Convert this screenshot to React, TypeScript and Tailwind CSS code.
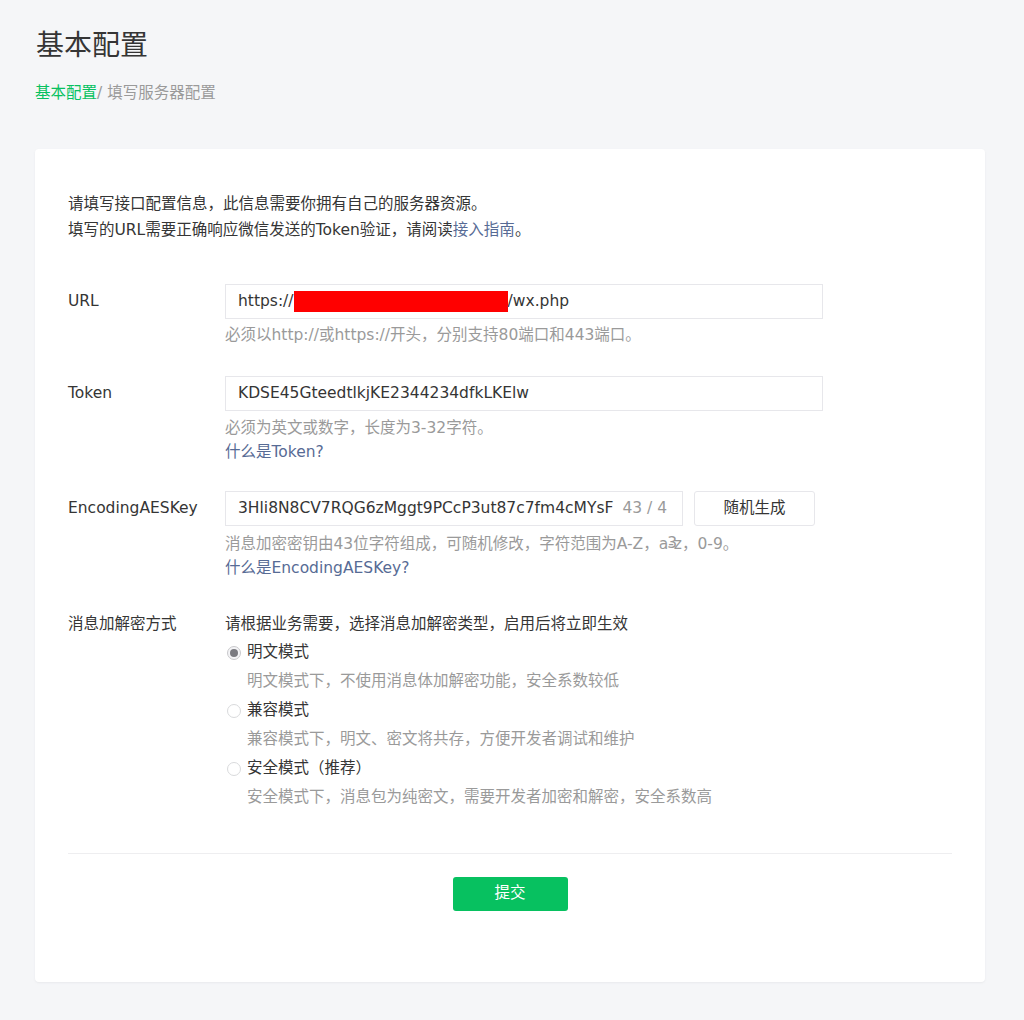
import React from "react";

const font = { fontFamily: '"DejaVu Sans", "Noto Sans CJK SC", sans-serif' };

function Radio({ checked }: { checked?: boolean }) {
  return (
    <span
      className={`mr-[6px] flex h-[14px] w-[14px] shrink-0 items-center justify-center rounded-full border ${
        checked ? "border-[#c9c9cc] bg-[#f4f4f6]" : "border-[#d9dadc] bg-white"
      }`}
    >
      {checked && <span className="h-[8px] w-[8px] rounded-full bg-[#7a7a80]" />}
    </span>
  );
}

function Row({ label, children, className = "" }: { label: string; children: React.ReactNode; className?: string }) {
  return (
    <div className={`flex ${className}`}>
      <div className="w-[157px] shrink-0 leading-[35px] text-[#353535]">{label}</div>
      <div className="flex-1">{children}</div>
    </div>
  );
}

export default function App() {
  return (
    <div className="min-h-[1020px] bg-[#f5f6f8] pt-[28px] pr-[39px] pb-[39px] pl-[35px] text-[15.5px]" style={font}>
      <h1 className="pl-px text-[28px] leading-[36px] font-normal text-[#353535]">基本配置</h1>
      <div className="mt-[19px] leading-[20px] text-[#9a9a9a]">
        <span className="text-[#07c160]">基本配置</span>/ 填写服务器配置
      </div>

      <div className="mt-[46px] rounded-[4px] bg-white px-[33px] pt-[42px] pb-[71px] shadow-[0_1px_2px_rgba(150,150,160,0.12)]">
        <p className="leading-[26px] text-[#353535]">
          请填写接口配置信息，此信息需要你拥有自己的服务器资源。
          <br />
          填写的URL需要正确响应微信发送的Token验证，请阅读<span className="text-[#576b95]">接入指南</span>。
        </p>

        <Row label="URL" className="mt-[41px]">
          <div className="flex h-[35px] w-[598px] items-center border border-[#e7e7eb] px-[12px] text-[#353535]">
            https://<span className="inline-block h-[21px] w-[214px] bg-[#ff0000]" />/wx.php
          </div>
          <div className="mt-[4px] leading-[24px] text-[#9a9a9a]">必须以http://或https://开头，分别支持80端口和443端口。</div>
        </Row>

        <Row label="Token" className="mt-[29px]">
          <div className="flex h-[35px] w-[598px] items-center border border-[#e7e7eb] px-[12px] text-[#353535]">
            KDSE45GteedtlkjKE2344234dfkLKElw
          </div>
          <div className="mt-[5px] leading-[24px] text-[#9a9a9a]">必须为英文或数字，长度为3-32字符。</div>
          <div className="leading-[24px] text-[#576b95]">什么是Token?</div>
        </Row>

        <Row label="EncodingAESKey" className="mt-[27px]">
          <div className="flex gap-[11px]">
            <div className="flex h-[35px] w-[458px] items-center overflow-hidden border border-[#e7e7eb] pl-[12px] whitespace-nowrap">
              <span className="text-[#353535]">3Hli8N8CV7RQG6zMggt9PCcP3ut87c7fm4cMYsF</span>
              <span className="ml-[9px] text-[#9a9a9a]">43 / 4</span>
            </div>
            <button className="h-[35px] w-[121px] rounded-[3px] border border-[#e7e7eb] bg-white text-[#353535]">随机生成</button>
          </div>
          <div className="mt-[6px] leading-[24px] text-[#9a9a9a]">
            消息加密密钥由43位字符组成，可随机修改，字符范围为A-Z，a
            <span className="relative">
              -<span className="absolute top-[-4px] left-[-1px]">3</span>
            </span>
            z，0-9。
          </div>
          <div className="leading-[24px] text-[#576b95]">什么是EncodingAESKey?</div>
        </Row>

        <div className="mt-[32px] flex">
          <div className="w-[157px] shrink-0 leading-[24px] text-[#353535]">消息加解密方式</div>
          <div className="flex-1 text-[#353535]">
            <div className="leading-[24px]">请根据业务需要，选择消息加解密类型，启用后将立即生效</div>
            <div className="mt-[2px] flex items-center pl-[2px] leading-[29px]">
              <Radio checked />
              明文模式
            </div>
            <div className="pl-[22px] leading-[29px] text-[#9a9a9a]">明文模式下，不使用消息体加解密功能，安全系数较低</div>
            <div className="flex items-center pl-[2px] leading-[29px]">
              <Radio />
              兼容模式
            </div>
            <div className="pl-[22px] leading-[29px] text-[#9a9a9a]">兼容模式下，明文、密文将共存，方便开发者调试和维护</div>
            <div className="flex items-center pl-[2px] leading-[29px]">
              <Radio />
              安全模式（推荐）
            </div>
            <div className="pl-[22px] leading-[29px] text-[#9a9a9a]">安全模式下，消息包为纯密文，需要开发者加密和解密，安全系数高</div>
          </div>
        </div>

        <div className="mt-[41px] border-t border-[#eeeef0]" />
        <div className="mt-[23px] flex justify-center">
          <button className="h-[34px] w-[115px] rounded-[3px] bg-[#07c160] text-white">提交</button>
        </div>
      </div>
    </div>
  );
}
